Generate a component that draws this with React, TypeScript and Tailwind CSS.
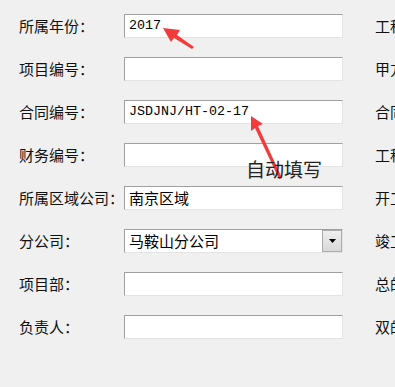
import React from 'react'

type Row = {
  label: string
  value?: string
  mono?: boolean
  select?: boolean
  right: string
}

const rows: Row[] = [
  { label: '所属年份：', value: '2017', mono: true, right: '工程名称：' },
  { label: '项目编号：', right: '甲方单位：' },
  { label: '合同编号：', value: 'JSDJNJ/HT-02-17', mono: true, right: '合同金额：' },
  { label: '财务编号：', right: '工程类型：' },
  { label: '所属区域公司：', value: '南京区域', right: '开工日期：' },
  { label: '分公司：', value: '马鞍山分公司', select: true, right: '竣工日期：' },
  { label: '项目部：', right: '总的金额：' },
  { label: '负责人：', right: '双的金额：' },
]

const cjk = "font-['SimSun','Noto_Sans_CJK_SC',sans-serif]"

function Field({ row }: { row: Row }) {
  return (
    <div className="relative flex h-[24px] w-[219px] shrink-0 items-center border border-t-[#a0a0a0] border-l-[#a0a0a0] border-r-[#e3e3e3] border-b-[#e3e3e3] bg-white">
      {row.value && (
        <span
          className={
            row.mono
              ? "pl-[4px] font-['Liberation_Mono',monospace] text-[13.33px] text-black"
              : `pl-[4px] ${cjk} text-[15px] text-black`
          }
        >
          {row.value}
        </span>
      )}
      {row.select && (
        <div className="absolute right-0 top-0 flex h-[22px] w-[20px] items-center justify-center border border-[#acacac] bg-gradient-to-b from-[#f0f0f0] to-[#d8d8d8]">
          <svg width="7" height="4" viewBox="0 0 7 4">
            <polygon points="0,0 7,0 3.5,4" fill="#000" />
          </svg>
        </div>
      )}
    </div>
  )
}

export default function App() {
  return (
    <div className="relative h-[387px] w-[395px] overflow-hidden bg-[#f0f0f0]">
      <div className="flex w-[520px] flex-col gap-[19px] pt-[14px]">
        {rows.map((row) => (
          <div key={row.label} className="flex h-[24px] items-center">
            <div className={`w-[124px] shrink-0 whitespace-nowrap pl-[19px] ${cjk} text-[15px] text-[#111]`}>
              {row.label}
            </div>
            <Field row={row} />
            <div className={`ml-[32px] shrink-0 whitespace-nowrap ${cjk} text-[15px] text-[#111]`}>
              {row.right}
            </div>
          </div>
        ))}
      </div>

      {/* annotation arrows */}
      <svg className="pointer-events-none absolute left-0 top-0" width="395" height="387">
        <g fill="#f23b3b">
          <polygon points="163,28 180,30 177,35 194,47 192,49 174,38 171,42" />
          <polygon points="251,116 263,124 258,126 282,178 279,179 255,128 251,131" />
        </g>
      </svg>

      <div className={`absolute left-[246px] top-[159px] ${cjk} text-[19px] leading-none text-[#222]`}>
        自动填写
      </div>
    </div>
  )
}
